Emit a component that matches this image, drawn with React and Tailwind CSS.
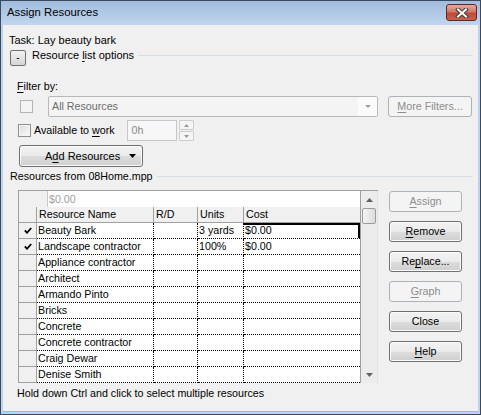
import React from "react";

const ui = "font-['Liberation_Sans',Arial,sans-serif]";

const rows = [
  { name: "Beauty Bark", check: true, units: "3 yards", cost: "$0.00", selected: true },
  { name: "Landscape contractor", check: true, units: "100%", cost: "$0.00" },
  { name: "Appliance contractor" },
  { name: "Architect" },
  { name: "Armando Pinto" },
  { name: "Bricks" },
  { name: "Concrete" },
  { name: "Concrete contractor" },
  { name: "Craig Dewar" },
  { name: "Denise Smith" },
];

function U({ children }) {
  return <span className="underline decoration-1 underline-offset-[2px]">{children}</span>;
}

function Button({ children, disabled, className = "" }) {
  return (
    <div
      className={`flex items-center justify-center rounded-[3px] border text-[10.7px] leading-none ${
        disabled
          ? "border-[#adb2b5] bg-[#f4f4f4] text-[#8d8d8d]"
          : "border-[#707070] bg-[linear-gradient(#f2f2f2_0%,#ebebeb_50%,#dddddd_51%,#cfcfcf_100%)] text-black shadow-[inset_0_0_0_1px_#fbfbfb]"
      } ${className}`}
    >
      {children}
    </div>
  );
}

function Checkbox({ disabled }) {
  return (
    <div
      className={`h-[13px] w-[13px] border ${
        disabled ? "border-[#b4b4b4] bg-[#f4f4f4]" : "border-[#8e8f8f] bg-[linear-gradient(135deg,#dcdcdc,#fbfbfb)] shadow-[inset_0_0_0_1px_#f4f4f4]"
      }`}
    />
  );
}

function Tri({ up, color = "#000", w = 7, h = 4 }) {
  return (
    <svg width={w} height={h} viewBox={`0 0 ${w} ${h}`}>
      <polygon points={up ? `0,${h} ${w},${h} ${w / 2},0` : `0,0 ${w},0 ${w / 2},${h}`} fill={color} />
    </svg>
  );
}

function Check() {
  return (
    <svg width="8" height="7" viewBox="0 0 8 7">
      <path d="M0.8 3.4 L3 5.8 L7.2 1" fill="none" stroke="#000" strokeWidth="1.7" />
    </svg>
  );
}

export default function App() {
  return (
    <div className={`${ui} flex h-[415px] w-[481px] flex-col overflow-hidden border border-[#3a4a5e] bg-[#bcd3ec] text-[10.7px] text-black`}>
      {/* title bar */}
      <div className="flex h-[24px] shrink-0 items-start bg-[linear-gradient(#a1bcdd,#c0d5ed)]">
        <span className="ml-[6px] mt-[4px] text-[11.3px] leading-[14px] text-black">Assign Resources</span>
        <div className="ml-auto mr-[3px] mt-[3px] flex h-[17px] w-[31px] items-center justify-center rounded-[3px] border border-[#5b2a28] bg-[linear-gradient(#e8aa9c_0%,#d0796a_45%,#c04a36_55%,#c9614c_100%)]">
          <svg width="14" height="10" viewBox="0 0 14 10">
            <path d="M3 1.5 L11 8.5 M11 1.5 L3 8.5" stroke="#3b3b3b" strokeWidth="4" strokeLinecap="square" />
            <path d="M3 1.5 L11 8.5 M11 1.5 L3 8.5" stroke="#fff" strokeWidth="2" strokeLinecap="square" />
          </svg>
        </div>
      </div>

      {/* client */}
      <div className="mx-[2px] mb-[2px] flex flex-1 flex-col border-b border-[#86c3ea] bg-[#f0f0f0]">
        <div className="ml-[6px] mt-[8px] text-[11px] leading-[14px]">Task: Lay beauty bark</div>

        <div className="mt-[2px] flex items-start">
          <div className="ml-[7px] mt-[1px] flex h-[16px] w-[16px] items-center justify-center rounded-[2px] border border-[#707070] bg-[linear-gradient(#f2f2f2,#d6d6d6)] text-[10px] leading-none">
            -
          </div>
          <span className="ml-[6px] text-[11px] leading-[13px]">
            Resource <U>l</U>ist options
          </span>
          <div className="ml-[4px] mr-[5px] mt-[6px] h-px flex-1 bg-[#d5dfe5]" />
        </div>

        <div className="ml-[14px] mt-[14px] leading-[13px]">
          <U>F</U>ilter by:
        </div>

        <div className="mt-[3px] flex h-[21px] items-center">
          <div className="ml-[17px]">
            <Checkbox disabled />
          </div>
          <div className="ml-[15px] flex h-[21px] w-[330px] items-center rounded-[2px] border border-[#b8b8b8] bg-[#f4f4f4]">
            <span className="ml-[3px] text-[#6d6d6d]">All Resources</span>
            <div className="ml-auto flex h-full w-[19px] items-center justify-center bg-[#fbfbfb]">
              <Tri color="#9a9a9a" w={6} h={3} />
            </div>
          </div>
          <Button disabled className="ml-[10px] h-[21px] w-[84px]">
            <span>
              <U>M</U>ore Filters...
            </span>
          </Button>
        </div>

        <div className="mt-[3px] flex h-[21px] items-center">
          <div className="ml-[15px]">
            <Checkbox />
          </div>
          <span className="ml-[3px]">
            Available to <U>w</U>ork
          </span>
          <div className="ml-[12px] flex h-[21px] w-[50px] items-center border border-[#c5c7cb] bg-[#f7f7f7]">
            <span className="ml-[4px] text-[#8a8a8a]">0h</span>
          </div>
          <div className="ml-[2px] flex h-[21px] w-[15px] flex-col gap-px">
            <div className="flex flex-1 items-center justify-center rounded-[1px] border border-[#cdcdcd] bg-[#f5f5f5]">
              <Tri up color="#9a9a9a" w={5} h={3} />
            </div>
            <div className="flex flex-1 items-center justify-center rounded-[1px] border border-[#cdcdcd] bg-[#f5f5f5]">
              <Tri color="#9a9a9a" w={5} h={3} />
            </div>
          </div>
        </div>

        <div className="mt-[4px] flex">
          <Button className="ml-[16px] h-[22px] w-[124px] !justify-start">
            <span className="ml-[25px] text-[11px]">
              A<U>d</U>d Resources
            </span>
            <span className="ml-auto mr-[6px] flex">
              <Tri w={7} h={4} />
            </span>
          </Button>
        </div>

        <div className="mt-[3px] flex items-center">
          <span className="ml-[7px] leading-[13px]">Resources from 08Home.mpp</span>
          <div className="ml-[4px] mr-[5px] h-px flex-1 bg-[#d5dfe5]" />
        </div>

        {/* grid + buttons */}
        <div className="mt-[7px] flex items-start">
          <div className="ml-[15px] flex border-l border-t border-[#a0a0a0]">
            <div className="flex flex-col">
              <div className="flex h-[16px]">
                <div className="w-[28px] bg-[#f0f0f0]" />
                <div className="flex w-[313px] items-center border-l border-[#c8c8c8] bg-white">
                  <span className="ml-[1px] text-[#a0a0a0]">$0.00</span>
                </div>
              </div>
              <div className="grid h-[16px] grid-cols-[18px_117px_44px_46px_116px] border-b border-[#a0a0a0] bg-[#f0f0f0]">
                <div className="border-r border-[#a0a0a0]" />
                <div className="border-r border-[#a0a0a0] pl-[2px] leading-[15px]">Resource Name</div>
                <div className="border-r border-[#a0a0a0] pl-[2px] leading-[15px]">R/D</div>
                <div className="border-r border-[#a0a0a0] pl-[2px] leading-[15px]">Units</div>
                <div className="pl-[2px] leading-[15px]">Cost</div>
              </div>
              {rows.map((r) => (
                <div key={r.name} className="grid h-[16px] grid-cols-[18px_117px_44px_46px_116px] bg-white">
                  <div className="flex items-center justify-center border-b border-r border-[#a0a0a0] bg-[#f0f0f0]">
                    {r.check && <Check />}
                  </div>
                  <div className="border-b border-r border-dotted border-black pl-[1px] leading-[15px]">{r.name}</div>
                  <div className="border-b border-r border-dotted border-black" />
                  <div className="border-b border-r border-dotted border-black pl-[1px] leading-[15px]">{r.units}</div>
                  <div
                    className={`border-b border-dotted border-black pl-[1px] leading-[15px] ${
                      r.selected ? "shadow-[inset_-1px_1px_0_1px_#000]" : ""
                    }`}
                  >
                    {r.cost}
                  </div>
                </div>
              ))}
            </div>
            <div className="flex w-[18px] flex-col border-l border-r border-[#a0a0a0] border-r-[#e2e2e2] bg-[#ececec]">
              <div className="flex h-[17px] items-center justify-center">
                <Tri up color="#606060" w={7} h={4} />
              </div>
              <div className="mx-[1px] h-[16px] rounded-[2px] border border-[#9b9b9b] bg-[linear-gradient(90deg,#f4f4f4,#dcdcdc)]" />
              <div className="flex-1" />
              <div className="flex h-[17px] items-center justify-center">
                <Tri color="#606060" w={7} h={4} />
              </div>
            </div>
          </div>

          <div className="ml-[11px] mt-[1px] flex flex-col gap-[9px]">
            <Button disabled className="h-[21px] w-[73px]">
              <span>
                <U>A</U>ssign
              </span>
            </Button>
            <Button className="h-[21px] w-[73px]">
              <span>
                <U>R</U>emove
              </span>
            </Button>
            <Button className="h-[21px] w-[73px]">
              <span>
                Re<U>p</U>lace...
              </span>
            </Button>
            <Button disabled className="h-[21px] w-[73px]">
              <span>
                <U>G</U>raph
              </span>
            </Button>
            <Button className="h-[21px] w-[73px]">
              <span>Close</span>
            </Button>
            <Button className="h-[21px] w-[73px]">
              <span>
                <U>H</U>elp
              </span>
            </Button>
          </div>
        </div>

        <div className="ml-[14px] mt-[4px] leading-[13px]">Hold down Ctrl and click to select multiple resources</div>
      </div>
    </div>
  );
}
